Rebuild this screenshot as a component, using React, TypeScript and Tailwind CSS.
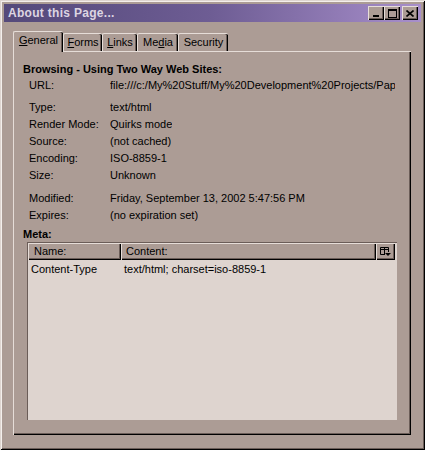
import React from 'react';

const rows: [string, string][] = [
  ['Type:', 'text/html'],
  ['Render Mode:', 'Quirks mode'],
  ['Source:', '(not cached)'],
  ['Encoding:', 'ISO-8859-1'],
  ['Size:', 'Unknown'],
];

function Row({ label, value }: { label: string; value: string }) {
  return (
    <div className="flex h-[17px] items-center">
      <span className="w-[87px] shrink-0 pl-[6px]">{label}</span>
      <span className="whitespace-nowrap overflow-hidden">{value}</span>
    </div>
  );
}

function Tab({ children, active, w }: { children: React.ReactNode; active?: boolean; w: string }) {
  return (
    <div
      className={
        (active
          ? 'relative z-10 -mb-[1px] h-[21px] pb-[3px] '
          : 'h-[18px] ') +
        w +
        ' flex items-center justify-center rounded-t-[2px] border-l border-t border-[#e6ddd8] bg-[#ac9c95] shadow-[inset_-1px_0_0_#000,inset_-2px_0_0_#6b5d58]'
      }
    >
      {children}
    </div>
  );
}

function WinButton({ children }: { children: React.ReactNode }) {
  return (
    <div className="flex h-[14px] w-[16px] items-center justify-center bg-[#ac9c95] shadow-[inset_1px_1px_0_#e6ddd8,inset_-1px_-1px_0_#000,inset_-2px_-2px_0_#6b5d58]">
      {children}
    </div>
  );
}

export default function App() {
  return (
    <div
      className="flex h-[450px] w-[425px] flex-col bg-[#ac9c95] p-[4px] text-[11px] text-black shadow-[inset_1px_1px_0_#ded5d0,inset_-1px_-1px_0_#000,inset_2px_2px_0_#f4efec,inset_-2px_-2px_0_#6b5d58]"
      style={{ fontFamily: '"Liberation Sans", Arial, sans-serif' }}
    >
      {/* Title bar */}
      <div className="flex h-[18px] items-center justify-between bg-gradient-to-r from-[#54497a] via-[#6e5d94] to-[#a88fcb] pl-[4px] pr-[3px]">
        <span className="text-[12px] font-bold tracking-[0.3px] text-[#ddd5e2]">About this Page...</span>
        <div className="flex items-center">
          <WinButton>
            <div className="mt-[6px] h-[2px] w-[6px] bg-black" />
          </WinButton>
          <WinButton>
            <div className="h-[9px] w-[9px] border border-t-2 border-black" />
          </WinButton>
          <div className="ml-[2px]">
            <WinButton>
              <svg width="8" height="7" viewBox="0 0 8 7">
                <path d="M0.5 0.5 L7.5 6.5 M7.5 0.5 L0.5 6.5" stroke="#000" strokeWidth="1.6" />
              </svg>
            </WinButton>
          </div>
        </div>
      </div>

      {/* Tabs */}
      <div className="ml-[9px] mt-[9px] flex h-[20px] items-end">
        <Tab active w="w-[50px]">
          <span>
            <span className="underline">G</span>eneral
          </span>
        </Tab>
        <Tab w="w-[39px]">
          <span>
            <span className="underline">F</span>orms
          </span>
        </Tab>
        <Tab w="w-[35px]">
          <span>
            <span className="underline">L</span>inks
          </span>
        </Tab>
        <Tab w="w-[41px]">
          <span>
            Me<span className="underline">d</span>ia
          </span>
        </Tab>
        <Tab w="w-[50px]">
          <span>Security</span>
        </Tab>
      </div>

      {/* Panel */}
      <div className="ml-[9px] flex h-[384px] w-[398px] flex-col border-l border-t border-[#e6ddd8] px-[9px] pt-[9px] shadow-[inset_-1px_-1px_0_#000,inset_-2px_-2px_0_#6b5d58]">
        <div className="flex h-[16px] items-center font-bold">Browsing - Using Two Way Web Sites:</div>
        <div className="flex h-[17px] items-center">
          <span className="w-[87px] shrink-0 pl-[6px]">URL:</span>
          <span className="w-[285px] overflow-hidden whitespace-nowrap">
            file:///c:/My%20Stuff/My%20Development%20Projects/Pap
          </span>
        </div>
        <div className="h-[5px]" />
        {rows.map(([l, v]) => (
          <Row key={l} label={l} value={v} />
        ))}
        <div className="h-[6px]" />
        <Row label="Modified:" value="Friday, September 13, 2002 5:47:56 PM" />
        <Row label="Expires:" value="(no expiration set)" />
        <div className="mt-[3px] flex h-[15px] items-center font-bold">Meta:</div>

        {/* Meta list */}
        <div className="ml-[4px] flex h-[178px] w-[370px] flex-col bg-[#ded4cf] shadow-[inset_1px_1px_0_#6b5d58]">
          <div className="ml-[1px] mt-[1px] flex h-[17px]">
            <div className="flex w-[93px] items-center bg-[#ac9c95] pl-[6px] shadow-[inset_1px_1px_0_#e6ddd8,inset_-1px_-1px_0_#000,inset_-2px_-2px_0_#6b5d58]">
              Name:
            </div>
            <div className="flex w-[255px] items-center bg-[#ac9c95] pl-[5px] shadow-[inset_1px_1px_0_#e6ddd8,inset_-1px_-1px_0_#000,inset_-2px_-2px_0_#6b5d58]">
              Content:
            </div>
            <div className="flex w-[19px] items-center justify-center bg-[#ac9c95] shadow-[inset_1px_1px_0_#e6ddd8,inset_-1px_-1px_0_#000,inset_-2px_-2px_0_#6b5d58]">
              <svg width="11" height="10" viewBox="0 0 11 10">
                <path d="M0.5 0.5 H8.5 V5 M0.5 0.5 V7.5 H5 M0.5 2.5 H8.5 M4.5 0.5 V7.5" stroke="#000" strokeWidth="1" fill="none" />
                <path d="M5 6 H11 L8 9 Z" fill="#000" />
              </svg>
            </div>
          </div>
          <div className="flex h-[19px] items-center">
            <span className="w-[97px] shrink-0 pl-[4px]">Content-Type</span>
            <span>text/html; charset=iso-8859-1</span>
          </div>
        </div>
      </div>
    </div>
  );
}
